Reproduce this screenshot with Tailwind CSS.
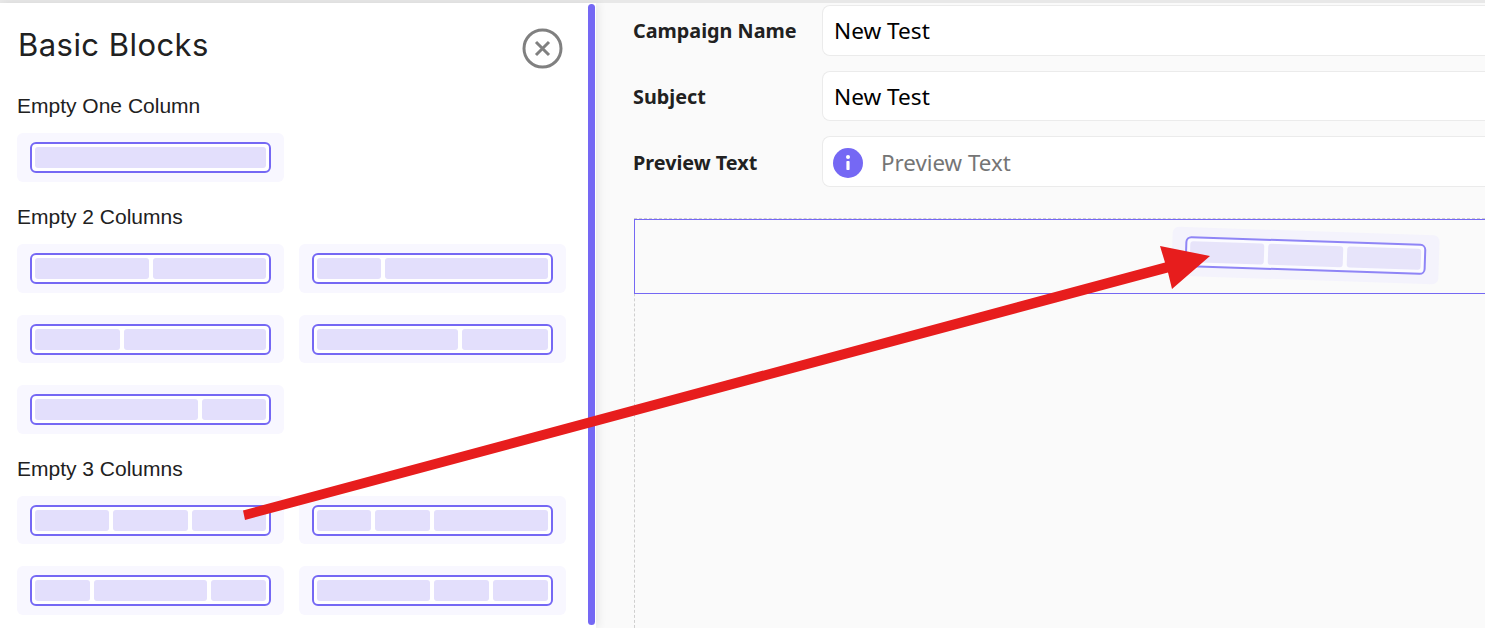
<!DOCTYPE html>
<html lang="en">
  <head>
    <meta charset="UTF-8" />
    <title>Basic Blocks</title>
    <script src="https://cdn.jsdelivr.net/npm/@tailwindcss/browser@4"></script>
  </head>
  <body class="bg-[#fafafa] text-[#212121] overflow-hidden">
    <div class="relative w-[1485px] h-[628px] overflow-hidden">
      <div class="h-[3px] bg-[#e8e8e8]"></div>
      <div class="flex h-[625px]">
        <!-- Sidebar -->
        <aside class="relative w-[596px] shrink-0 h-full bg-white pl-[17px] pt-[20px] shadow-[3px_0_8px_rgba(0,0,0,0.07)] font-['Liberation_Sans',sans-serif]">
          <div class="absolute right-0 top-[1px] w-[7px] h-[621px] mr-px rounded-full bg-[#7568f4]"></div>
          <div class="flex w-[546px] justify-between">
            <h2 class="text-[31px] leading-[44px] font-['Inter',sans-serif] tracking-[0.45px] pl-px">Basic Blocks</h2>
            <svg class="mt-[5px]" width="41" height="41" viewBox="0 0 41 41" fill="none" stroke="#808080">
              <circle cx="20.5" cy="20.5" r="18.5" stroke-width="3" />
              <path d="M14 14 L27 27 M27 14 L14 27" stroke-width="3" />
            </svg>
          </div>

          <h3 class="mt-[25px] text-[21px] leading-[24px]">Empty One Column</h3>
          <div class="mt-[15px] grid grid-cols-[267px_267px] gap-x-[15px] gap-y-[22px]">
            <div class="h-[49px] rounded-md bg-[#f8f7ff] pl-[13px] pt-[9px]"><div class="flex gap-[4px] w-[241px] h-[31px] p-[3px] border-2 border-[#7568f4] rounded-md bg-white"><div class="flex-1 rounded-[3px] bg-[#e3dffc]"></div></div></div>
          </div>

          <h3 class="mt-[23px] text-[21px] leading-[24px]">Empty 2 Columns</h3>
          <div class="mt-[15px] grid grid-cols-[267px_267px] gap-x-[15px] gap-y-[22px]">
            <div class="h-[48.5px] rounded-md bg-[#f8f7ff] pl-[13px] pt-[9px]"><div class="flex gap-[4px] w-[241px] h-[31px] p-[3px] border-2 border-[#7568f4] rounded-md bg-white"><div class="flex-1 rounded-[3px] bg-[#e3dffc]"></div><div class="flex-1 rounded-[3px] bg-[#e3dffc]"></div></div></div>
            <div class="h-[48.5px] rounded-md bg-[#f8f7ff] pl-[13px] pt-[9px]"><div class="flex gap-[4px] w-[241px] h-[31px] p-[3px] border-2 border-[#7568f4] rounded-md bg-white"><div class="w-[64px] rounded-[3px] bg-[#e3dffc]"></div><div class="flex-1 rounded-[3px] bg-[#e3dffc]"></div></div></div>
            <div class="h-[48.5px] rounded-md bg-[#f8f7ff] pl-[13px] pt-[9px]"><div class="flex gap-[4px] w-[241px] h-[31px] p-[3px] border-2 border-[#7568f4] rounded-md bg-white"><div class="w-[85px] rounded-[3px] bg-[#e3dffc]"></div><div class="flex-1 rounded-[3px] bg-[#e3dffc]"></div></div></div>
            <div class="h-[48.5px] rounded-md bg-[#f8f7ff] pl-[13px] pt-[9px]"><div class="flex gap-[4px] w-[241px] h-[31px] p-[3px] border-2 border-[#7568f4] rounded-md bg-white"><div class="w-[141px] rounded-[3px] bg-[#e3dffc]"></div><div class="flex-1 rounded-[3px] bg-[#e3dffc]"></div></div></div>
            <div class="h-[48.5px] rounded-md bg-[#f8f7ff] pl-[13px] pt-[9px]"><div class="flex gap-[4px] w-[241px] h-[31px] p-[3px] border-2 border-[#7568f4] rounded-md bg-white"><div class="w-[163px] rounded-[3px] bg-[#e3dffc]"></div><div class="flex-1 rounded-[3px] bg-[#e3dffc]"></div></div></div>
          </div>

          <h3 class="mt-[23px] text-[21px] leading-[24px]">Empty 3 Columns</h3>
          <div class="mt-[15px] grid grid-cols-[267px_267px] gap-x-[15px] gap-y-[22px]">
            <div class="h-[48.5px] rounded-md bg-[#f8f7ff] pl-[13px] pt-[9px]"><div class="flex gap-[4px] w-[241px] h-[31px] p-[3px] border-2 border-[#7568f4] rounded-md bg-white"><div class="flex-1 rounded-[3px] bg-[#e3dffc]"></div><div class="flex-1 rounded-[3px] bg-[#e3dffc]"></div><div class="flex-1 rounded-[3px] bg-[#e3dffc]"></div></div></div>
            <div class="h-[48.5px] rounded-md bg-[#f8f7ff] pl-[13px] pt-[9px]"><div class="flex gap-[4px] w-[241px] h-[31px] p-[3px] border-2 border-[#7568f4] rounded-md bg-white"><div class="w-[54px] rounded-[3px] bg-[#e3dffc]"></div><div class="w-[55px] rounded-[3px] bg-[#e3dffc]"></div><div class="flex-1 rounded-[3px] bg-[#e3dffc]"></div></div></div>
            <div class="h-[48.5px] rounded-md bg-[#f8f7ff] pl-[13px] pt-[9px]"><div class="flex gap-[4px] w-[241px] h-[31px] p-[3px] border-2 border-[#7568f4] rounded-md bg-white"><div class="w-[55px] rounded-[3px] bg-[#e3dffc]"></div><div class="flex-1 rounded-[3px] bg-[#e3dffc]"></div><div class="w-[55px] rounded-[3px] bg-[#e3dffc]"></div></div></div>
            <div class="h-[48.5px] rounded-md bg-[#f8f7ff] pl-[13px] pt-[9px]"><div class="flex gap-[4px] w-[241px] h-[31px] p-[3px] border-2 border-[#7568f4] rounded-md bg-white"><div class="flex-1 rounded-[3px] bg-[#e3dffc]"></div><div class="w-[55px] rounded-[3px] bg-[#e3dffc]"></div><div class="w-[55px] rounded-[3px] bg-[#e3dffc]"></div></div></div>
          </div>
        </aside>

        <!-- Campaign form -->
        <main class="flex-1 min-w-0 pl-[37px] pt-[2px]">
          <div class="flex flex-col gap-[15px] font-['Noto_Sans',sans-serif]">
            <div class="flex items-center">
              <label class="w-[189px] shrink-0 text-[19.8px] font-bold pt-[2px]">Campaign Name</label>
              <div class="flex-1 h-[50.5px] flex items-center pl-[11px] pt-[2px] bg-white border border-[#ebebeb] border-r-0 rounded-l-lg text-[22.6px] text-black">New Test</div>
            </div>
            <div class="flex items-center">
              <label class="w-[189px] shrink-0 text-[19.8px] font-bold pt-[3px]">Subject</label>
              <div class="flex-1 h-[50.5px] flex items-center pl-[11px] pt-[3px] bg-white border border-[#ebebeb] border-r-0 rounded-l-lg text-[22.6px] text-black">New Test</div>
            </div>
            <div class="flex items-center">
              <label class="w-[189px] shrink-0 text-[19.8px] font-bold pt-[3px]">Preview Text</label>
              <div class="flex-1 h-[51px] flex items-center gap-[18px] px-[10px] bg-white border border-[#ebebeb] border-r-0 rounded-l-lg text-[22.3px] text-[#757575]">
                <svg class="mt-[3px]" width="30" height="30" viewBox="0 0 30 30"><circle cx="15" cy="15" r="15" fill="#7568f4" /><circle cx="15" cy="9" r="2" fill="#fff" /><rect x="13.4" y="13" width="3.2" height="9" rx="0.8" fill="#fff" /></svg>
                <span class="pt-[3px]">Preview Text</span>
              </div>
            </div>
          </div>
          <!-- Drop zone -->
          <div class="mt-[31px] ml-px h-[420px] border-l border-t border-dashed border-[#cfcfcf]">
            <div class="h-[75px] -ml-px border border-r-0 border-[#7568f4]"></div>
          </div>
        </main>
      </div>

      <!-- Dragged block -->
      <div class="absolute left-[1172px] top-[231px] w-[267px] h-[49px] rotate-[1.9deg] rounded-md bg-[#f4f3fc] pl-[13px] pt-[9px]"><div class="flex gap-[4px] w-[241px] h-[31px] p-[3px] border-2 border-[#8f85f6] rounded-md bg-[#fbfbff]"><div class="flex-1 rounded-[3px] bg-[#e7e4fa]"></div><div class="flex-1 rounded-[3px] bg-[#e7e4fa]"></div><div class="flex-1 rounded-[3px] bg-[#e7e4fa]"></div></div></div>

      <!-- Annotation arrow -->
      <svg class="absolute left-0 top-0 pointer-events-none" width="1485" height="628" viewBox="0 0 1485 628">
        <polygon fill="#e71d1d" points="243,510.5 245,520 1168,272.5 1172,289 1210,256 1160,246 1165,262.5" />
      </svg>
    </div>
  </body>
</html>
